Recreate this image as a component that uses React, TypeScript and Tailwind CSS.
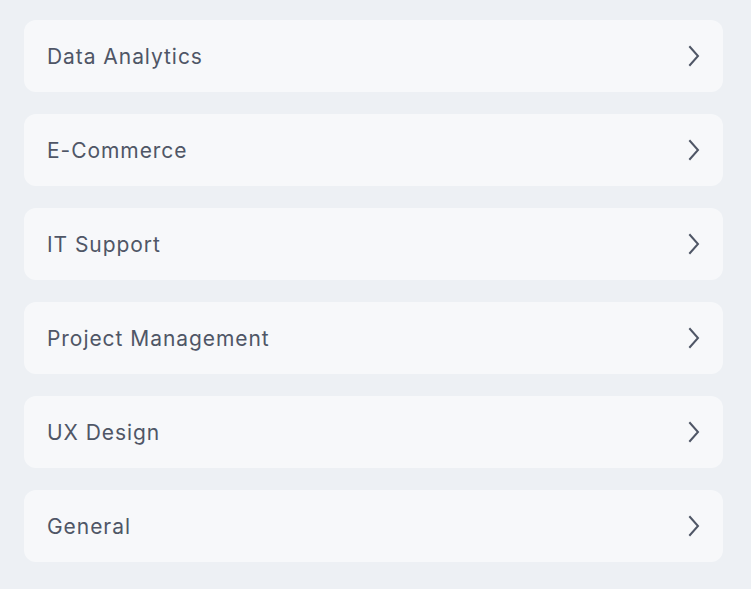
const items = [
  "Data Analytics",
  "E-Commerce",
  "IT Support",
  "Project Management",
  "UX Design",
  "General",
];

function Chevron() {
  return (
    <svg width="12" height="22" viewBox="0 0 12 22" fill="none" stroke="currentColor" strokeWidth="2" strokeLinecap="square">
      <polyline points="2,2 10,11 2,20" />
    </svg>
  );
}

export default function App() {
  return (
    <div className="min-h-screen bg-[#edf0f4] pt-5 pl-6 pr-7 pb-7 font-['Inter',sans-serif]">
      <div className="flex flex-col gap-[22px]">
        {items.map((item) => (
          <div
            key={item}
            className="flex h-[72px] items-center justify-between rounded-xl bg-[#f7f8fa] pl-[23px] pr-[23px] text-[#4f5666] cursor-pointer"
          >
            <span className="pt-[2px] text-[21px] font-normal tracking-[0.045em]">{item}</span>
            <Chevron />
          </div>
        ))}
      </div>
    </div>
  );
}
